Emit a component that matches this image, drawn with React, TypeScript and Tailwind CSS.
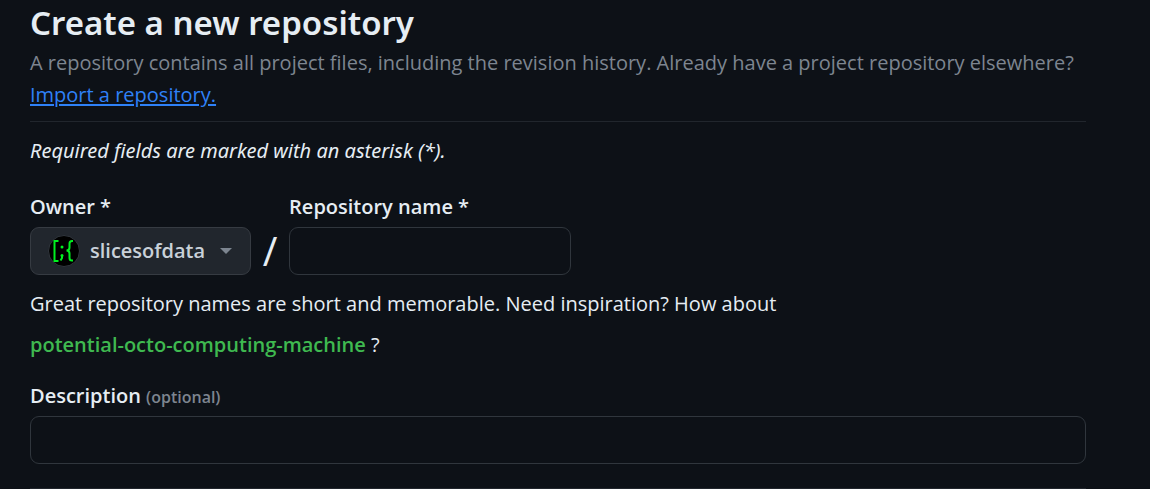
function Avatar() {
  return (
    <svg viewBox="0 0 32 32" className="size-8 shrink-0" fill="none" aria-hidden="true">
      <circle cx="16" cy="16" r="15.5" fill="#000" stroke="#30363d" />
      <g stroke="#00f020" strokeWidth="2">
        <path d="M10.500 6H6.500V26H10.500" />
        <path d="M25 6H24Q21.500 6 21.500 8.500V12.500Q21.500 15.500 18.500 15.500Q21.500 15.500 21.500 18.500V23Q21.500 25.500 24 25.500H25" />
        <path d="M14 20.500V23L12.500 25.500" />
      </g>
      <circle cx="14" cy="12" r="1.500" fill="#00f020" />
      <circle cx="14" cy="20.500" r="1.500" fill="#00f020" />
    </svg>
  );
}

export default function App() {
  return (
    <main className="min-h-screen overflow-hidden bg-[#0d1117] pr-16 pl-[30px] font-['Open_Sans','Noto_Sans',sans-serif] text-xl leading-8 text-[#e6edf3]">
      <header className="border-b border-[#21262d] pb-[10px]">
        <h1 className="mb-[2px] font-['Noto_Sans',sans-serif] text-[33px] leading-[45px] font-semibold">Create a new repository</h1>
        <p className="text-[#7d8590]">
          A repository contains all project files, including the revision history. Already have a project repository elsewhere?{' '}
          <a href="#import" className="text-[#2f81f7] underline underline-offset-2">
            Import a repository.
          </a>
        </p>
      </header>

      <form>
        <p className="mt-[13px] font-['Noto_Sans',sans-serif] italic">Required fields are marked with an asterisk (*).</p>

        <div className="mt-6 flex items-end">
          <div>
            <label htmlFor="owner" className="mb-1 block font-semibold">
              Owner *
            </label>
            <button
              id="owner"
              type="button"
              className="flex h-12 items-center rounded-[9px] border border-[#363b42] bg-[#21262d] pr-[18px] pl-[17px] font-semibold text-[#c9d1d9]"
            >
              <Avatar />
              <span className="ml-[10px]">slicesofdata</span>
              <svg viewBox="0 0 12 6" className="ml-[15px] h-1.5 w-3" fill="#7d8590" aria-hidden="true">
                <path d="M0 0H12L6 6Z" />
              </svg>
            </button>
          </div>
          <span className="w-[38px] text-center text-[40px] leading-[48px]">/</span>
          <div>
            <label htmlFor="repository-name" className="mb-1 block font-semibold">
              Repository name *
            </label>
            <input
              id="repository-name"
              type="text"
              className="block h-12 w-[282px] rounded-[9px] border border-[#30363d] bg-[#0d1117] px-4"
            />
          </div>
        </div>

        <p className="mt-2 max-w-[800px] leading-[41px]">
          Great repository names are short and memorable. Need inspiration? How about{' '}
          <button type="button" className="font-semibold text-[#3fb950]">
            potential-octo-computing-machine
          </button>{' '}
          ?
        </p>

        <label htmlFor="description" className="mt-[15px] mb-1 block font-semibold">
          Description <span className="text-base font-semibold text-[#7d8590]">(optional)</span>
        </label>
        <input
          id="description"
          type="text"
          className="block h-12 w-full rounded-[9px] border border-[#30363d] bg-[#0d1117] px-4"
        />
        <hr className="mt-6 border-[#21262d]" />
      </form>
    </main>
  );
}
